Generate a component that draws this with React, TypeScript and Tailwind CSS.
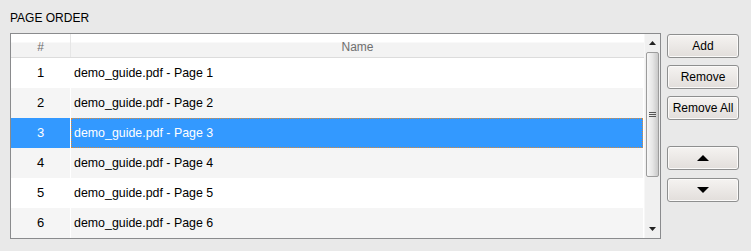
import React from "react";

const rows = [1, 2, 3, 4, 5, 6];

function Btn({ children }: { children: React.ReactNode }) {
  return (
    <div className="h-[24px] w-[72px] rounded-[3px] border border-[#8e8f8f] bg-[linear-gradient(#f5f3f1,#e2dedb)] flex items-center justify-center text-[12px] text-black shadow-[inset_0_0_0_1px_#fbfaf9]">
      {children}
    </div>
  );
}

export default function App() {
  return (
    <div className="w-[751px] h-[251px] bg-[#e9e9e9] pl-[10px] pt-[11px] font-['Liberation_Sans',Arial,sans-serif] overflow-hidden">
      <div className="text-[12px] leading-[14px] text-black h-[22px]">PAGE ORDER</div>
      <div className="flex gap-[6px]">
        <div className="w-[651px] h-[206px] border border-[#8a8b8d] bg-white flex">
          <div className="flex-1 flex flex-col">
            <div className="h-[24px] flex border-b border-[#dcdcdc] bg-[linear-gradient(#ffffff_0,#ffffff_8px,#f3f3f3_9px,#f3f3f3_100%)] text-[12px] text-[#6f6f6f]">
              <div className="w-[59px] flex items-center justify-center pt-[2px]">#</div>
              <div className="w-[1px] bg-[#e6e6e6]" />
              <div className="flex-1 flex items-center justify-center pt-[2px]">Name</div>
            </div>
            {rows.map((n) => {
              const sel = n === 3;
              const bg = sel ? "bg-[#3399ff]" : n % 2 === 0 ? "bg-[#f5f5f5]" : "bg-white";
              return (
                <div key={n} className={`h-[30px] flex text-[12.4px] ${sel ? "text-white" : "text-black"}`}>
                  <div className={`w-[59px] flex items-center justify-center text-[13px] ${bg}`}>{n}</div>
                  <div className="w-[1px] bg-white" />
                  <div
                    className={`flex-1 flex items-center mr-[1px] ${bg} ${
                      sel ? "pl-[2px] border border-dotted border-[#d98a3a]" : "pl-[3px]"
                    }`}
                  >
                    demo_guide.pdf - Page {n}
                  </div>
                </div>
              );
            })}
          </div>
          <div className="w-[16px] bg-[#f0f0f0] border-l border-[#f7f7f7] flex flex-col items-center">
            <div className="h-[18px] w-full flex items-center justify-center">
              <svg width="7" height="4" viewBox="0 0 7 4">
                <path d="M3.5 0 L7 4 L0 4 Z" fill="#222" />
              </svg>
            </div>
            <div className="w-[13px] h-[125px] rounded-[2px] border border-[#9c9c9c] bg-[linear-gradient(90deg,#f7f7f7,#e6e6e6_50%,#c9c9c9)] flex flex-col items-center justify-center gap-[1px]">
              <div className="w-[7px] h-[1px] bg-[#555]" />
              <div className="w-[7px] h-[1px] bg-[#555]" />
              <div className="w-[7px] h-[1px] bg-[#555]" />
            </div>
            <div className="flex-1" />
            <div className="h-[18px] w-full flex items-center justify-center">
              <svg width="7" height="4" viewBox="0 0 7 4">
                <path d="M0 0 L7 0 L3.5 4 Z" fill="#222" />
              </svg>
            </div>
          </div>
        </div>
        <div className="flex flex-col pt-[1px]">
          <div className="flex flex-col gap-[7px]">
            <Btn>Add</Btn>
            <Btn>Remove</Btn>
            <Btn>Remove All</Btn>
          </div>
          <div className="flex flex-col gap-[8px] mt-[26px]">
            <Btn>
              <svg width="12" height="6" viewBox="0 0 12 6">
                <path d="M6 0 L12 6 L0 6 Z" fill="#000" />
              </svg>
            </Btn>
            <Btn>
              <svg width="12" height="6" viewBox="0 0 12 6">
                <path d="M0 0 L12 0 L6 6 Z" fill="#000" />
              </svg>
            </Btn>
          </div>
        </div>
      </div>
    </div>
  );
}
